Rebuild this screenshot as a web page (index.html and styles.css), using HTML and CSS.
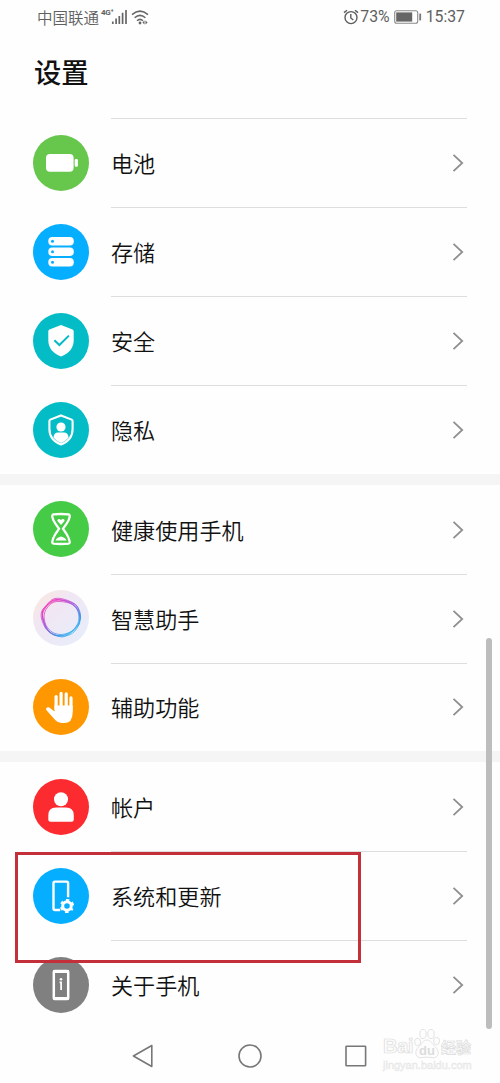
FILE: index.html
```html
<!DOCTYPE html>
<html lang="zh-CN">
<head>
    <meta charset="UTF-8">
    <meta name="viewport" content="width=device-width, initial-scale=1.0">
    <title>设置</title>
    <link rel="stylesheet" href="styles.css">
</head>
<body>

<svg class="defs" width="0" height="0">
    <symbol id="chevron" viewBox="0 0 12 20">
        <path d="M1.5 1.8 L10.2 10 L1.5 18.2" fill="none" stroke="#8f8f8f" stroke-width="1.8"/>
    </symbol>
    <linearGradient id="halo" x1="0" y1="0" x2="1" y2="1">
        <stop offset="0" stop-color="#fbe9dc"/>
        <stop offset="0.35" stop-color="#f1e6f3"/>
        <stop offset="1" stop-color="#e6effb"/>
    </linearGradient>
    <linearGradient id="swirl" x1="0.1" y1="0.1" x2="0.8" y2="0.9">
        <stop offset="0" stop-color="#f52fb4"/>
        <stop offset="0.45" stop-color="#a052dc"/>
        <stop offset="0.8" stop-color="#3d8fe6"/>
        <stop offset="1" stop-color="#35b4ee"/>
    </linearGradient>
</svg>

<div class="phone">
    <header class="status-bar">
        <div class="status-left">
            <span class="carrier">中国联通</span>
            <span class="network">4G⁺</span>
            <svg class="signal" width="17" height="16" viewBox="0 0 17 16">
                <path d="M1.8 12.5V15M5.1 9.5V15M8.3 7V15M11.6 3.8V15M15 1V15" stroke="#666" stroke-width="1.7"/>
            </svg>
            <svg class="wifi" width="18" height="15" viewBox="0 0 18 15" fill="none" stroke="#666" stroke-width="1.5">
                <path d="M1 4.6Q9 -2.4 17 4.6M3.6 7.8Q9 3 14.4 7.8M6 10.7Q9 8 12 10.7"/>
                <circle cx="9" cy="13" r="1.4" fill="#666" stroke="none"/>
                <path d="M13.5 10.6L11.4 12.6L13.5 14.6ZM14.5 10.6L16.6 12.6L14.5 14.6Z" fill="#666" stroke="none"/>
            </svg>
        </div>
        <div class="status-right">
            <svg class="alarm" width="16" height="16" viewBox="0 0 16 16" fill="none" stroke="#5d5d5d" stroke-width="1.4">
                <circle cx="8" cy="8.6" r="6"/>
                <path d="M7.8 5V9L10.3 11M1 3.6L4 1.2M15 3.6L12 1.2"/>
            </svg>
            <span class="percent">73%</span>
            <svg class="battery" width="28" height="14" viewBox="0 0 28 14">
                <rect x="0.7" y="0.7" width="23" height="12.6" rx="2" fill="none" stroke="#8a8a8a" stroke-width="1.1"/>
                <rect x="2.2" y="2.4" width="16" height="9.2" fill="#666"/>
                <rect x="25.3" y="3.6" width="1.8" height="6.8" fill="#777"/>
            </svg>
            <span class="clock">15:37</span>
        </div>
    </header>

    <h1 class="title">设置</h1>

    <main class="settings">
        <section class="group first">
            <div class="row">
                <svg class="icon" viewBox="0 0 56 56">
                    <circle cx="28" cy="28" r="28" fill="#67c64c"/>
                    <rect x="13" y="19" width="27.6" height="17.8" rx="4" fill="#fff"/>
                    <rect x="41.7" y="24" width="3.2" height="7.8" rx="1.2" fill="#fff"/>
                </svg>
                <div class="cell"><span>电池</span><svg class="chevron"><use href="#chevron"/></svg></div>
            </div>
            <div class="row">
                <svg class="icon" viewBox="0 0 56 56">
                    <circle cx="28" cy="28" r="28" fill="#06aeff"/>
                    <g fill="#fff">
                        <rect x="15.3" y="13" width="25.5" height="8.4" rx="4"/>
                        <rect x="15.3" y="23.5" width="25.5" height="8.4" rx="4"/>
                        <rect x="15.3" y="34" width="25.5" height="8.4" rx="4"/>
                    </g>
                    <g fill="#06aeff">
                        <circle cx="19.5" cy="17.2" r="1.5"/>
                        <circle cx="19.5" cy="27.7" r="1.5"/>
                        <circle cx="19.5" cy="38.2" r="1.5"/>
                    </g>
                </svg>
                <div class="cell"><span>存储</span><svg class="chevron"><use href="#chevron"/></svg></div>
            </div>
            <div class="row">
                <svg class="icon" viewBox="0 0 56 56">
                    <circle cx="28" cy="28" r="28" fill="#04bcc6"/>
                    <path d="M28 12L39.5 16.6Q40.7 17.1 40.7 18.4V27C40.7 35 36 40.6 28 43.4C20 40.6 15.3 35 15.3 27V18.4Q15.3 17.1 16.5 16.6Z" fill="#fff"/>
                    <path d="M21.4 27.2L26.4 32L35.9 22.6" fill="none" stroke="#04bcc6" stroke-width="2"/>
                </svg>
                <div class="cell"><span>安全</span><svg class="chevron"><use href="#chevron"/></svg></div>
            </div>
            <div class="row">
                <svg class="icon" viewBox="0 0 56 56">
                    <circle cx="28" cy="28" r="28" fill="#04bcc6"/>
                    <path d="M28 13.4L38.7 17.6Q39.6 18 39.6 19V27C39.6 34.5 35.4 39.7 28 42.4C20.6 39.7 16.4 34.5 16.4 27V19Q16.4 18 17.3 17.6Z" fill="none" stroke="#fff" stroke-width="2.1"/>
                    <circle cx="28" cy="25" r="4.6" fill="#fff"/>
                    <path d="M20.4 35.5Q21 30.6 25 30.6H31Q35 30.6 35.6 35.5Q33 39 28 41Q23 39 20.4 35.5Z" fill="#fff"/>
                </svg>
                <div class="cell"><span>隐私</span><svg class="chevron"><use href="#chevron"/></svg></div>
            </div>
        </section>

        <section class="group">
            <div class="row">
                <svg class="icon" viewBox="0 0 56 56">
                    <circle cx="28" cy="28" r="28" fill="#46cb46"/>
                    <path d="M20.5 13.4Q28 12.6 35.5 13.4Q37.2 13.8 36.6 16.2Q35.8 19.6 33.6 22.6L30 27.8L33.6 33Q36 36.8 36.7 40.6Q37 42.4 35.5 42.6Q28 43.4 20.5 42.6Q19 42.4 19.3 40.6Q20 36.8 22.4 33L26 27.8L22.4 22.6Q20.2 19.6 19.4 16.2Q18.8 13.8 20.5 13.4Z" fill="none" stroke="#fff" stroke-width="2.3"/>
                    <path d="M28 24L24.8 20.4C23.4 18.5 26 16.8 28 18.9C30 16.8 32.6 18.5 31.2 20.4Z" fill="#fff"/>
                    <path d="M22.4 39.6Q23.5 36.6 28 35.6Q32.5 36.6 33.6 39.6Z" fill="#fff"/>
                </svg>
                <div class="cell"><span>健康使用手机</span><svg class="chevron"><use href="#chevron"/></svg></div>
            </div>
            <div class="row">
                <svg class="icon" viewBox="0 0 56 56">
                    <circle cx="28" cy="28" r="28" fill="url(#halo)"/>
                    <g fill="none" stroke="url(#swirl)" stroke-width="0.9" stroke-opacity="0.85">
                        <path d="M22 8.5C27 7.5 36 10 42.5 14.5C48 20 49 28 45.5 35C43 42 37 46.5 29 46C20 47 13 41 10.5 34C7.5 28 7 22 11 18C15 15 17 9.5 22 8.5Z"/>
                        <path d="M24 9.5C31 10 38 10.5 44 16C47 21 47 29 46.5 34C43 40 37 44 30 45.5C22 46.5 15 43 12.5 36C9 29 8.5 25 11 20C14 15 18 10 24 9.5Z"/>
                        <path d="M20.5 10C27 9 35 11.5 41 14.5C46.5 20 48 27 46 33C41 39 37 46 29 47C21 46 16 42 12 37C11 30 8.5 25 10 20C12 16 15 12.5 20.5 10Z"/>
                        <path d="M25 11.5C32 11.5 40 13 43.5 18C46.5 24 47 30 43.5 36C40 42 33 44.5 27 44.5C19 44 14.5 39 12.5 34C10 27 11 22 14 18C17 14 20 11.5 25 11.5Z"/>
                        <path d="M23 10.5C29 8.5 37 12 41 16C46 21 49.5 26 46.5 31C44.5 38 39 42 34 44C27 47.5 18 46 14.5 39C11 34 8 28 9.5 21C12 18 17 12 23 10.5Z"/>
                    </g>
                </svg>
                <div class="cell"><span>智慧助手</span><svg class="chevron"><use href="#chevron"/></svg></div>
            </div>
            <div class="row">
                <svg class="icon" viewBox="0 0 56 56">
                    <circle cx="28" cy="28" r="28" fill="#ff9800"/>
                    <path d="M23.1 17.6V30M28.1 14.4V30M33.2 14.9V30M38 18.9V32" stroke="#fff" stroke-width="3.2" stroke-linecap="round"/>
                    <path d="M21.5 26.5H39.6V34Q39.6 44 31 44H28.6Q24.7 44 22.2 41L13.5 31.3C12 29.3 14.6 27.4 16.6 28.8L21.5 32.6Z" fill="#fff"/>
                </svg>
                <div class="cell"><span>辅助功能</span><svg class="chevron"><use href="#chevron"/></svg></div>
            </div>
        </section>

        <section class="group">
            <div class="row">
                <svg class="icon" viewBox="0 0 56 56">
                    <circle cx="28" cy="28" r="28" fill="#fb2b30"/>
                    <circle cx="28" cy="20.3" r="7" fill="#fff"/>
                    <path d="M15.3 36.4Q15.3 28.6 23 28.6H33Q40.8 28.6 40.8 36.4V40.6Q40.8 42.8 38.6 42.8H17.5Q15.3 42.8 15.3 40.6Z" fill="#fff"/>
                </svg>
                <div class="cell"><span>帐户</span><svg class="chevron"><use href="#chevron"/></svg></div>
            </div>
            <div class="row">
                <svg class="icon" viewBox="0 0 56 56">
                    <circle cx="28" cy="28" r="28" fill="#06aeff"/>
                    <path d="M27.2 42H22Q20.5 42 20.5 40.5V15.1Q20.5 13.6 22 13.6H33.6Q35.1 13.6 35.1 15.1V29.2" fill="none" stroke="#fff" stroke-width="2.4"/>
                    <circle cx="34" cy="38" r="4.3" fill="none" stroke="#fff" stroke-width="3"/>
                    <circle cx="34" cy="38" r="6.1" fill="none" stroke="#fff" stroke-width="2" stroke-dasharray="3.2 3.187" stroke-dashoffset="1.6" transform="rotate(30 34 38)"/>
                </svg>
                <div class="cell"><span>系统和更新</span><svg class="chevron"><use href="#chevron"/></svg></div>
                <div class="highlight"></div>
            </div>
            <div class="row">
                <svg class="icon" viewBox="0 0 56 56">
                    <circle cx="28" cy="28" r="28" fill="#808080"/>
                    <rect x="20.8" y="14" width="14.4" height="28" rx="1" fill="none" stroke="#fff" stroke-width="2.5"/>
                    <path d="M20.5 14.4H35.5M20.5 41.6H35.5" stroke="#fff" stroke-width="3"/>
                    <circle cx="28" cy="22.2" r="1.3" fill="#fff"/>
                    <path d="M26.6 25.4H28.1V33" fill="none" stroke="#fff" stroke-width="1.7"/>
                </svg>
                <div class="cell"><span>关于手机</span><svg class="chevron"><use href="#chevron"/></svg></div>
            </div>
        </section>
    </main>

    <nav class="nav-bar">
        <svg viewBox="0 0 26 26"><path d="M21.8 2.5V23.5L3.4 13Z"/></svg>
        <svg viewBox="0 0 26 26"><circle cx="13" cy="13" r="11"/></svg>
        <svg viewBox="0 0 26 26"><rect x="3" y="3.2" width="19.6" height="19.6" rx="0.6"/></svg>
    </nav>

    <div class="scrollbar"></div>

    <div class="watermark">
        <div class="brand">
            <span class="bai">Bai</span>
            <svg width="26" height="31" viewBox="0 0 26 31">
                <ellipse cx="3.6" cy="14" rx="3" ry="3.8"/>
                <ellipse cx="9" cy="6" rx="3.2" ry="4.6"/>
                <ellipse cx="17" cy="6" rx="3.2" ry="4.6"/>
                <ellipse cx="22.5" cy="13" rx="3" ry="3.8"/>
                <path d="M13 12C9 12 8 16 4.5 19C-0.5 24 2 30 7 29.8C11 29 15 29 19 29.8C24 30 26.5 24 21.5 19C18 16 17 12 13 12Z"/>
                <text x="13" y="26.5" text-anchor="middle">du</text>
            </svg>
            <span class="cn">经验</span>
        </div>
        <div class="site">jingyan.baidu.com</div>
    </div>
</div>

</body>
</html>
```
FILE: styles.css
```css
* {
    box-sizing: border-box;
}
body {
    margin: 0;
    background-color: #fefefe;
    font-family: "Noto Sans CJK SC", sans-serif;
    color: #111;
}
.defs {
    position: absolute;
}
.phone {
    position: relative;
    width: 500px;
    height: 1083px;
    overflow: hidden;
}

/* status bar */
.status-bar {
    display: flex;
    justify-content: space-between;
    height: 34px;
    padding: 0 35px 0 37px;
    color: #606060;
    line-height: 34px;
}
.status-left,
.status-right {
    display: flex;
    align-items: center;
}
.carrier {
    margin-top: -1px;
    font-size: 15.5px;
    font-weight: 350;
}
.network {
    margin: -9px 0 0 2px;
    width: 12px;
    font: bold 8px/10px Roboto, sans-serif;
    letter-spacing: -0.3px;
}
.signal {
    margin-left: -2px;
}
.wifi {
    margin-left: 3px;
}
.percent,
.clock {
    font-family: Roboto, sans-serif;
    font-size: 15.8px;
}
.percent {
    margin-left: 1px;
}
.battery {
    margin: 0 4px;
}

.title {
    height: 84px;
    margin: 0;
    padding: 17px 0 0 34px;
    font-size: 27.3px;
    font-weight: 500;
    line-height: 40px;
}

/* list */
.group + .group {
    border-top: 11px solid #f5f5f5;
}
.row {
    position: relative;
    display: flex;
    align-items: center;
    gap: 22px;
    height: 88.93px;
    padding: 0 33px;
}
.icon {
    width: 56px;
    height: 56px;
    flex: none;
    margin-top: 0.6px;
}
.cell {
    display: flex;
    flex: 1;
    align-items: center;
    justify-content: space-between;
    height: 100%;
    padding-right: 3px;
    border-top: 1px solid #dedede;
    font-size: 22.1px;
    font-weight: 350;
}
.cell span {
    margin-top: -2px;
}
.group:not(.first) .row:first-child .cell {
    border-top-color: transparent;
}
.chevron {
    width: 12px;
    height: 20px;
}
.highlight {
    position: absolute;
    left: 15px;
    top: 0.8px;
    width: 346px;
    height: 111px;
    border: 3px solid #c4303a;
    z-index: 1;
}

/* system navigation */
.nav-bar {
    display: flex;
    justify-content: space-between;
    padding: 13.8px 131px 0 130px;
}
.nav-bar svg {
    width: 26px;
    height: 26px;
    fill: none;
    stroke: #777;
    stroke-width: 1.6;
    stroke-linejoin: round;
}

.scrollbar {
    position: absolute;
    left: 486px;
    top: 638px;
    width: 6px;
    height: 391px;
    border-radius: 3px;
    background-color: #bdbdbd;
}

.watermark {
    position: absolute;
    left: 383px;
    top: 1028px;
    color: #fcfcfc;
    font-family: "Liberation Sans", sans-serif;
    -webkit-text-stroke: 0.7px #dcdcdc;
}
.brand {
    display: flex;
    align-items: flex-end;
    height: 31px;
    font-size: 20px;
    font-weight: bold;
    line-height: 25px;
}
.brand .bai {
    width: 30px;
    letter-spacing: -0.3px;
}
.brand svg {
    margin-left: 1px;
    fill: #fdfdfd;
    stroke: #dcdcdc;
    stroke-width: 0.8;
}
.brand text {
    font-size: 13px;
    stroke: none;
    fill: #dcdcdc;
    -webkit-text-stroke: 0;
}
.brand .cn {
    margin-left: 1px;
    font-family: "Noto Sans CJK SC", sans-serif;
    font-size: 15px;
}
.site {
    font-size: 11px;
    line-height: 12px;
    color: #f0f0f0;
    -webkit-text-stroke: 0.4px #e6e6e6;
}
```
